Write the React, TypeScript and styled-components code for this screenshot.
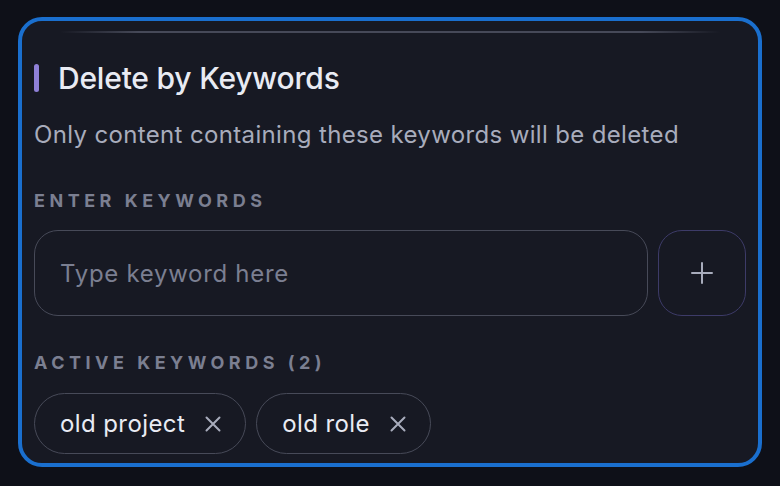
import React from "react";
import styled, { createGlobalStyle } from "styled-components";

const GlobalStyle = createGlobalStyle`
  html, body {
    margin: 0;
    padding: 0;
    background: #0e1018;
  }
  body {
    font-family: Inter, "Noto Sans", sans-serif;
    -webkit-font-smoothing: antialiased;
  }
`;

const Page = styled.div`
  width: 780px;
  height: 486px;
  padding: 17px 18px 19px;
  box-sizing: border-box;
`;

const Panel = styled.div`
  height: 100%;
  box-sizing: border-box;
  border: 4.5px solid #1a6fce;
  border-radius: 24px;
  background: #171923;
  padding: 10px 12px 9px;
  overflow: hidden;
  display: flex;
  flex-direction: column;
`;

const Divider = styled.div`
  height: 2px;
  margin: 0 26px;
  background: linear-gradient(
    90deg,
    rgba(70, 73, 88, 0) 0%,
    rgba(70, 73, 88, 1) 12%,
    rgba(70, 73, 88, 1) 88%,
    rgba(70, 73, 88, 0) 100%
  );
`;

const TitleRow = styled.div`
  display: flex;
  align-items: center;
  gap: 19px;
  margin-top: 29px;
`;

const Accent = styled.span`
  width: 5px;
  height: 28px;
  border-radius: 3px;
  background: #8f80d8;
`;

const Title = styled.h2`
  margin: 0;
  font-size: 30px;
  font-weight: 500;
  letter-spacing: -0.2px;
  color: #e9ebf3;
  line-height: 32px;
`;

const Description = styled.p`
  margin: 26px 0 0;
  font-size: 24px;
  letter-spacing: 0.35px;
  line-height: 30px;
  color: #a8acbc;
`;

const Label = styled.div<{ $top: number }>`
  margin-top: ${(p) => p.$top}px;
  font-size: 18px;
  line-height: 22px;
  font-weight: 700;
  letter-spacing: 4.5px;
  color: #7b7f91;
  text-transform: uppercase;
`;

const InputRow = styled.div`
  display: flex;
  gap: 10px;
  margin-top: 18px;
`;

const KeywordInput = styled.input`
  flex: 1;
  height: 86px;
  box-sizing: border-box;
  border: 1.5px solid #474a58;
  border-radius: 24px;
  background: transparent;
  padding: 0 25px;
  font-family: inherit;
  font-size: 24px;
  letter-spacing: 0.7px;
  color: #e9ebf3;
  outline: none;

  &::placeholder {
    color: #7b7f91;
  }
`;

const AddButton = styled.button`
  width: 88px;
  height: 86px;
  box-sizing: border-box;
  border: 1.5px solid #3d3b68;
  border-radius: 24px;
  background: transparent;
  display: flex;
  align-items: center;
  justify-content: center;
  padding: 0;
  color: #a8acbc;
`;

const ChipList = styled.div`
  display: flex;
  gap: 10px;
  margin-top: 19px;
`;

const Chip = styled.div`
  height: 61px;
  box-sizing: border-box;
  border: 1.5px solid #474a58;
  border-radius: 31px;
  display: flex;
  align-items: center;
  gap: 20px;
  padding: 0 24px 0 25px;
  font-size: 24px;
  letter-spacing: 0.4px;
  color: #e9ebf3;
`;

const Remove = styled.span`
  display: flex;
  color: #a8acbc;
`;

const keywords = ["old project", "old role"];

export default function App() {
  return (
    <>
      <GlobalStyle />
      <Page>
        <Panel>
          <Divider />
          <TitleRow>
            <Accent />
            <Title>Delete by Keywords</Title>
          </TitleRow>
          <Description>
            Only content containing these keywords will be deleted
          </Description>
          <Label $top={40}>Enter Keywords</Label>
          <InputRow>
            <KeywordInput placeholder="Type keyword here" />
            <AddButton>
              <svg width="24" height="24" viewBox="0 0 24 24" fill="none" stroke="currentColor" strokeWidth="2" strokeLinecap="round">
                <path d="M12 2v20M2 12h20" />
              </svg>
            </AddButton>
          </InputRow>
          <Label $top={36}>Active Keywords ({keywords.length})</Label>
          <ChipList>
            {keywords.map((k) => (
              <Chip key={k}>
                {k}
                <Remove>
                  <svg width="16" height="16" viewBox="0 0 16 16" fill="none" stroke="currentColor" strokeWidth="2" strokeLinecap="round">
                    <path d="M1.5 1.5l13 13M14.5 1.5l-13 13" />
                  </svg>
                </Remove>
              </Chip>
            ))}
          </ChipList>
        </Panel>
      </Page>
    </>
  );
}
